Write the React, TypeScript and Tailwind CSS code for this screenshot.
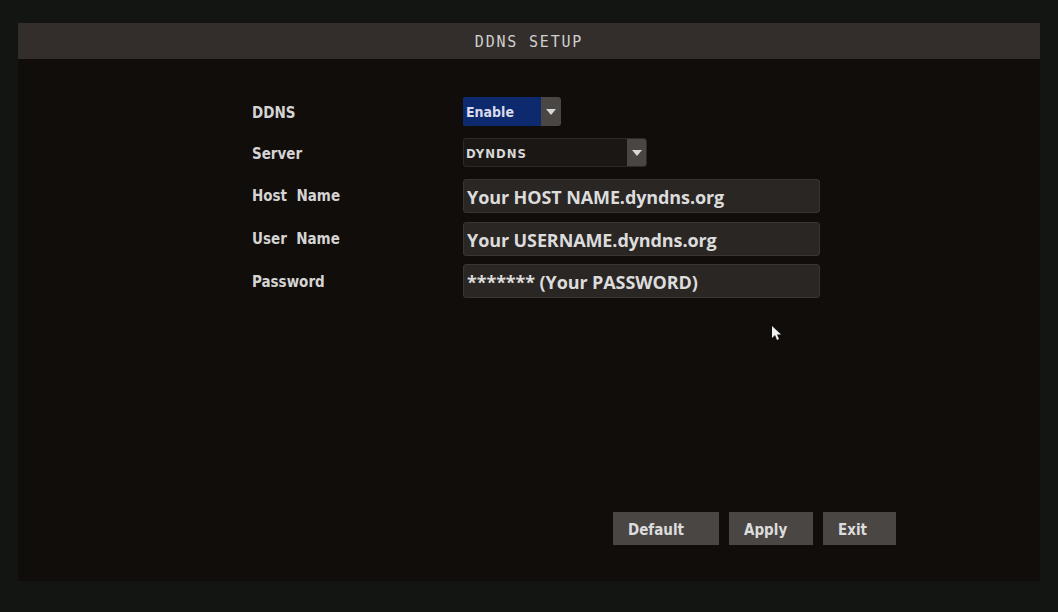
import React from "react";

function Arrow() {
  return (
    <svg width="10" height="6" viewBox="0 0 10 6">
      <path d="M0 0 L10 0 L5 6 Z" fill="#d8d8d8" />
    </svg>
  );
}

function Field({ text }: { text: string }) {
  return (
    <div className="w-[357px] h-[34px] rounded-[3px] bg-[#2a2624] border border-[#3a3533] flex items-center pl-[3px] pt-[2px] text-[#dcdcdc] text-[18px] font-bold tracking-[-0.1px]" style={{ fontFamily: '"Open Sans", "Liberation Sans", sans-serif' }}>
      {text}
    </div>
  );
}

const pixelFont = { fontFamily: '"DejaVu Sans Condensed", "DejaVu Sans", sans-serif' };

export default function App() {
  const labels = ["DDNS", "Server", "Host  Name", "User  Name", "Password"];
  const labelCls = "w-[211px] text-[#d4d4d4] text-[15px] font-bold whitespace-pre";
  return (
    <div className="w-[1058px] h-[612px] bg-[#131512] pt-[23px] px-[18px] relative overflow-hidden">
      <div className="w-[1022px] h-[558px] bg-[#110d0a] flex flex-col">
        <div className="h-[36px] bg-[#332e2b] flex items-center justify-center pt-[2px] text-[#d0d0d0] text-[15px] tracking-[1.8px]" style={{ fontFamily: '"DejaVu Sans Mono", monospace' }}>
          DDNS SETUP
        </div>
        <div className="flex-1 flex flex-col pl-[234px] pt-[38px]">
          <div className="flex items-center h-[29px]">
            <div className={`${labelCls} pt-[3px]`} style={pixelFont}>{labels[0]}</div>
            <div className="flex h-[29px] w-[98px] rounded-[3px] overflow-hidden bg-[#4a4644]">
              <div className="w-[78px] bg-[#0e2a6e] flex items-center pl-[3px] pt-[2px] text-[#d8dcec] text-[14px] font-bold" style={pixelFont}>Enable</div>
              <div className="flex-1 flex items-center justify-center"><Arrow /></div>
            </div>
          </div>
          <div className="flex items-center h-[29px] mt-[12px]">
            <div className={`${labelCls} pt-[4px]`} style={pixelFont}>{labels[1]}</div>
            <div className="flex h-[29px] w-[184px] rounded-[3px] overflow-hidden bg-[#1b1715] border border-[#2e2a28]">
              <div className="flex-1 flex items-center pl-[2px] pt-[2px] text-[#d8d8d8] text-[13px] font-bold tracking-[1px]" style={pixelFont}>DYNDNS</div>
              <div className="w-[19px] bg-[#4a4644] flex items-center justify-center"><Arrow /></div>
            </div>
          </div>
          <div className="flex items-center mt-[12px]">
            <div className={`${labelCls} pt-[1px]`} style={pixelFont}>{labels[2]}</div>
            <Field text="Your HOST NAME.dyndns.org" />
          </div>
          <div className="flex items-center mt-[9px]">
            <div className={`${labelCls} pt-[1px]`} style={pixelFont}>{labels[3]}</div>
            <Field text="Your USERNAME.dyndns.org" />
          </div>
          <div className="flex items-center mt-[8px]">
            <div className={`${labelCls} pt-[2px]`} style={pixelFont}>{labels[4]}</div>
            <Field text="******* (Your PASSWORD)" />
          </div>
          <div className="mt-auto mb-[36px] flex justify-end pr-[144px] gap-[10px]">
            {[["Default", "w-[106px]"], ["Apply", "w-[84px]"], ["Exit", "w-[73px]"]].map(([t, w]) => (
              <div key={t} className={`${w} h-[33px] bg-[#4a4644] flex items-center pl-[15px] pt-[3px] text-[#dcdcdc] text-[15px] font-bold`} style={pixelFont}>
                {t}
              </div>
            ))}
          </div>
        </div>
      </div>
      <svg className="absolute left-[772px] top-[326px]" width="10" height="16" viewBox="0 0 10 16">
        <path d="M0 0 L0 12 L3 9 L5 14 L7 13 L5 8.5 L9 8.5 Z" fill="#f0f0f0" />
      </svg>
    </div>
  );
}
